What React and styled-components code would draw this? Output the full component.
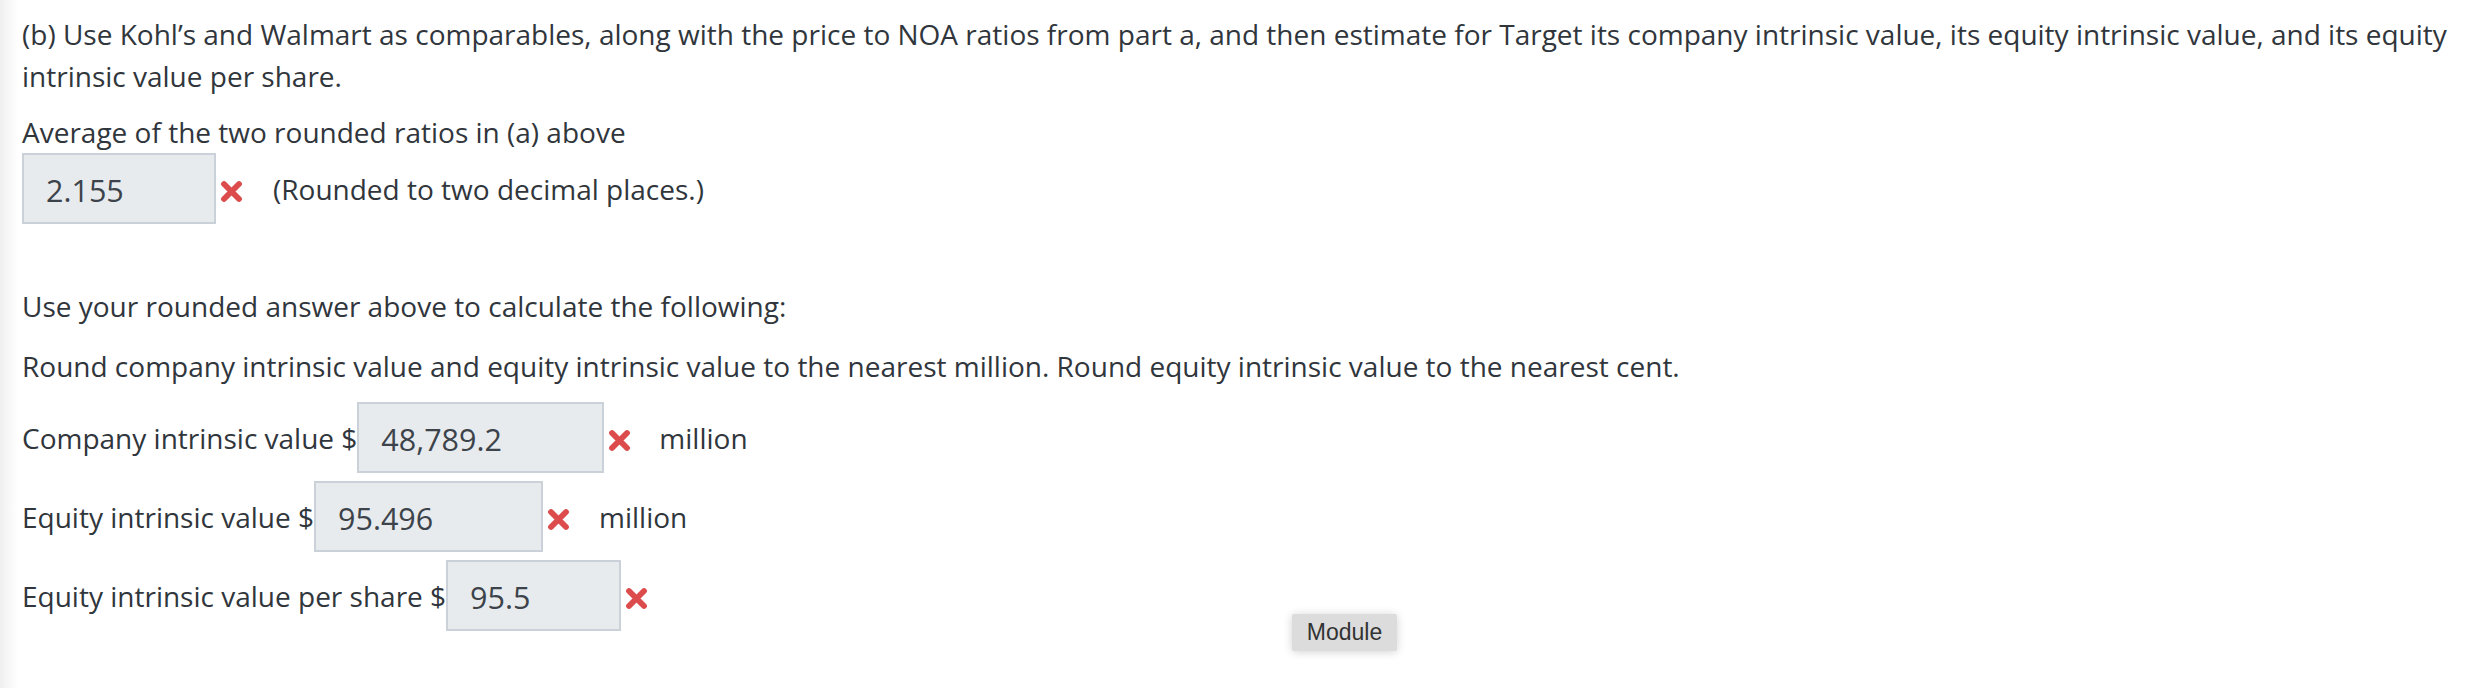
import React from "react";
import styled, { createGlobalStyle } from "styled-components";

const GlobalStyle = createGlobalStyle`
  html, body {
    margin: 0;
    padding: 0;
  }
  body {
    font-family: "Open Sans", "Noto Sans", sans-serif;
    color: #30363c;
    background: linear-gradient(to right, #efefef 0px, #f7f7f7 8px, #ffffff 18px);
  }
`;

const Page = styled.div`
  position: relative;
  min-height: 688px;
  box-sizing: border-box;
  padding: 13px 22px 0 22px;
`;

const Para = styled.p`
  margin: ${(p) => p.$mt || 0}px 0 ${(p) => p.$mb || 0}px 0;
  font-size: 28px;
  line-height: 42px;
`;

const Row = styled.div`
  display: flex;
  align-items: center;
  height: 71px;
  margin-top: ${(p) => p.$mt || 0}px;
  font-size: 28px;
`;

const Label = styled.span`
  margin-right: 0;
  white-space: pre;
`;

const InputBox = styled.div`
  box-sizing: border-box;
  width: ${(p) => p.$w}px;
  height: 71px;
  display: flex;
  align-items: center;
  padding: 3px 0 0 22px;
  background: #e8ebee;
  border: 2px solid #cbd1d8;
  color: #3d434a;
  font-size: 30.5px;
`;

const MarkWrap = styled.span`
  display: inline-flex;
  margin-left: 4px;
  margin-top: 5px;
  width: 23px;
  height: 23px;
`;

const After = styled.span`
  margin-left: ${(p) => p.$ml}px;
`;

const ModuleButton = styled.div`
  position: absolute;
  left: 1292px;
  top: 614px;
  width: 105px;
  height: 37px;
  box-sizing: border-box;
  display: flex;
  align-items: center;
  justify-content: center;
  background: #dcdcdc;
  border-radius: 2px;
  box-shadow: 0 1px 10px rgba(0, 0, 0, 0.18);
  font-family: "Liberation Sans", Arial, sans-serif;
  font-size: 23px;
  color: #333;
`;

const WrongMark = () => (
  <MarkWrap>
    <svg width="23" height="23" viewBox="0 0 23 23">
      <path
        d="M4 4 L19 19 M19 4 L4 19"
        stroke="#dc4c4c"
        strokeWidth="5.8"
        strokeLinecap="round"
        fill="none"
      />
    </svg>
  </MarkWrap>
);

export default function App() {
  return (
    <>
      <GlobalStyle />
      <Page>
        <Para $mb={14}>
          (b) Use Kohl’s and Walmart as comparables, along with the price to NOA ratios from part a, and then
          estimate for Target its company intrinsic value, its equity intrinsic value, and its equity intrinsic
          value per share.
        </Para>
        <Para>Average of the two rounded ratios in (a) above</Para>
        <Row>
          <InputBox $w={194}>2.155</InputBox>
          <WrongMark />
          <After $ml={30}>(Rounded to two decimal places.)</After>
        </Row>

        <Para $mt={61}>Use your rounded answer above to calculate the following:</Para>
        <Para $mt={18}>
          Round company intrinsic value and equity intrinsic value to the nearest million. Round equity
          intrinsic value to the nearest cent.
        </Para>

        <Row $mt={15}>
          <Label>Company intrinsic value $</Label>
          <InputBox $w={247}>48,789.2</InputBox>
          <WrongMark />
          <After $ml={28}>million</After>
        </Row>
        <Row $mt={8}>
          <Label>Equity intrinsic value $</Label>
          <InputBox $w={229}>95.496</InputBox>
          <WrongMark />
          <After $ml={29}>million</After>
        </Row>
        <Row $mt={8}>
          <Label>Equity intrinsic value per share $</Label>
          <InputBox $w={175}>95.5</InputBox>
          <WrongMark />
        </Row>

        <ModuleButton>Module</ModuleButton>
      </Page>
    </>
  );
}
